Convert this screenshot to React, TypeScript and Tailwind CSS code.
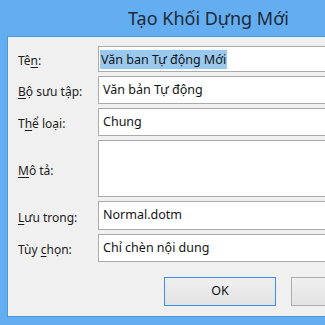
import React from "react";

const font = { fontFamily: '"Noto Sans", "Open Sans", sans-serif' };

function Label({ pre, u, post }: { pre: string; u: string; post: string }) {
  return (
    <span className="text-[12px] text-[#1b1b1b]">
      {pre}
      <span className="underline underline-offset-2">{u}</span>
      {post}
    </span>
  );
}

interface Row {
  label: { pre: string; u: string; post: string };
  value?: string;
  selected?: boolean;
  h: string;
  mt: string;
}

const rows: Row[] = [
  { label: { pre: "Tê", u: "n", post: ":" }, value: "Văn ban Tự động Mới", selected: true, h: "h-[26px]", mt: "mt-0" },
  { label: { pre: "", u: "B", post: "ộ sưu tập:" }, value: "Văn bản Tự động", h: "h-[28px]", mt: "mt-[4px]" },
  { label: { pre: "T", u: "h", post: "ể loại:" }, value: "Chung", h: "h-[28px]", mt: "mt-[4px]" },
  { label: { pre: "", u: "M", post: "ô tả:" }, h: "h-[57px]", mt: "mt-[4px]" },
  { label: { pre: "", u: "L", post: "ưu trong:" }, value: "Normal.dotm", h: "h-[29px]", mt: "mt-[4px]" },
  { label: { pre: "Tùy ", u: "c", post: "họn:" }, value: "Chỉ chèn nội dung", h: "h-[28px]", mt: "mt-[4px]" },
];

export default function App() {
  return (
    <div className="w-[325px] h-[325px] overflow-hidden bg-[#63aef1] flex flex-col" style={font}>
      {/* Title bar */}
      <div className="h-[36px] flex-shrink-0 pl-[128px] pt-[6px]">
        <span className="text-[18px] leading-[24px] text-[#1f2a36] whitespace-nowrap">Tạo Khối Dựng Mới</span>
      </div>

      {/* Client area */}
      <div className="ml-[7px] w-[420px] h-[281px] flex-shrink-0 bg-[#f0f0f0] border border-[#4f97dc] pt-[9px] pl-[10px]">
        {rows.map((r, i) => (
          <div key={i} className={`flex items-center ${r.mt}`}>
            <div className="w-[80px] flex-shrink-0">
              <Label {...r.label} />
            </div>
            <div className={`${r.h} w-[300px] bg-white border border-[#ababab] flex items-center pl-[1px]`}>
              {r.value &&
                (r.selected ? (
                  <span className="text-[12.5px] text-[#141414] bg-[#99c9ef] px-[1px] leading-[19px] whitespace-nowrap">
                    {r.value}
                  </span>
                ) : (
                  <span className="text-[12.5px] text-[#141414] pl-[3px] whitespace-nowrap">{r.value}</span>
                ))}
            </div>
          </div>
        ))}

        {/* Buttons */}
        <div className="flex gap-[15px] mt-[15px] pl-[146px]">
          <button className="w-[112px] h-[29px] border border-[#3c8fe6] bg-gradient-to-b from-[#efefef] to-[#e3e3e3] text-[12.5px] text-[#141414]">
            OK
          </button>
          <button
            aria-label="Hủy bỏ"
            className="w-[112px] h-[29px] border border-[#adadad] bg-gradient-to-b from-[#efefef] to-[#e3e3e3]"
          />
        </div>
      </div>
    </div>
  );
}
